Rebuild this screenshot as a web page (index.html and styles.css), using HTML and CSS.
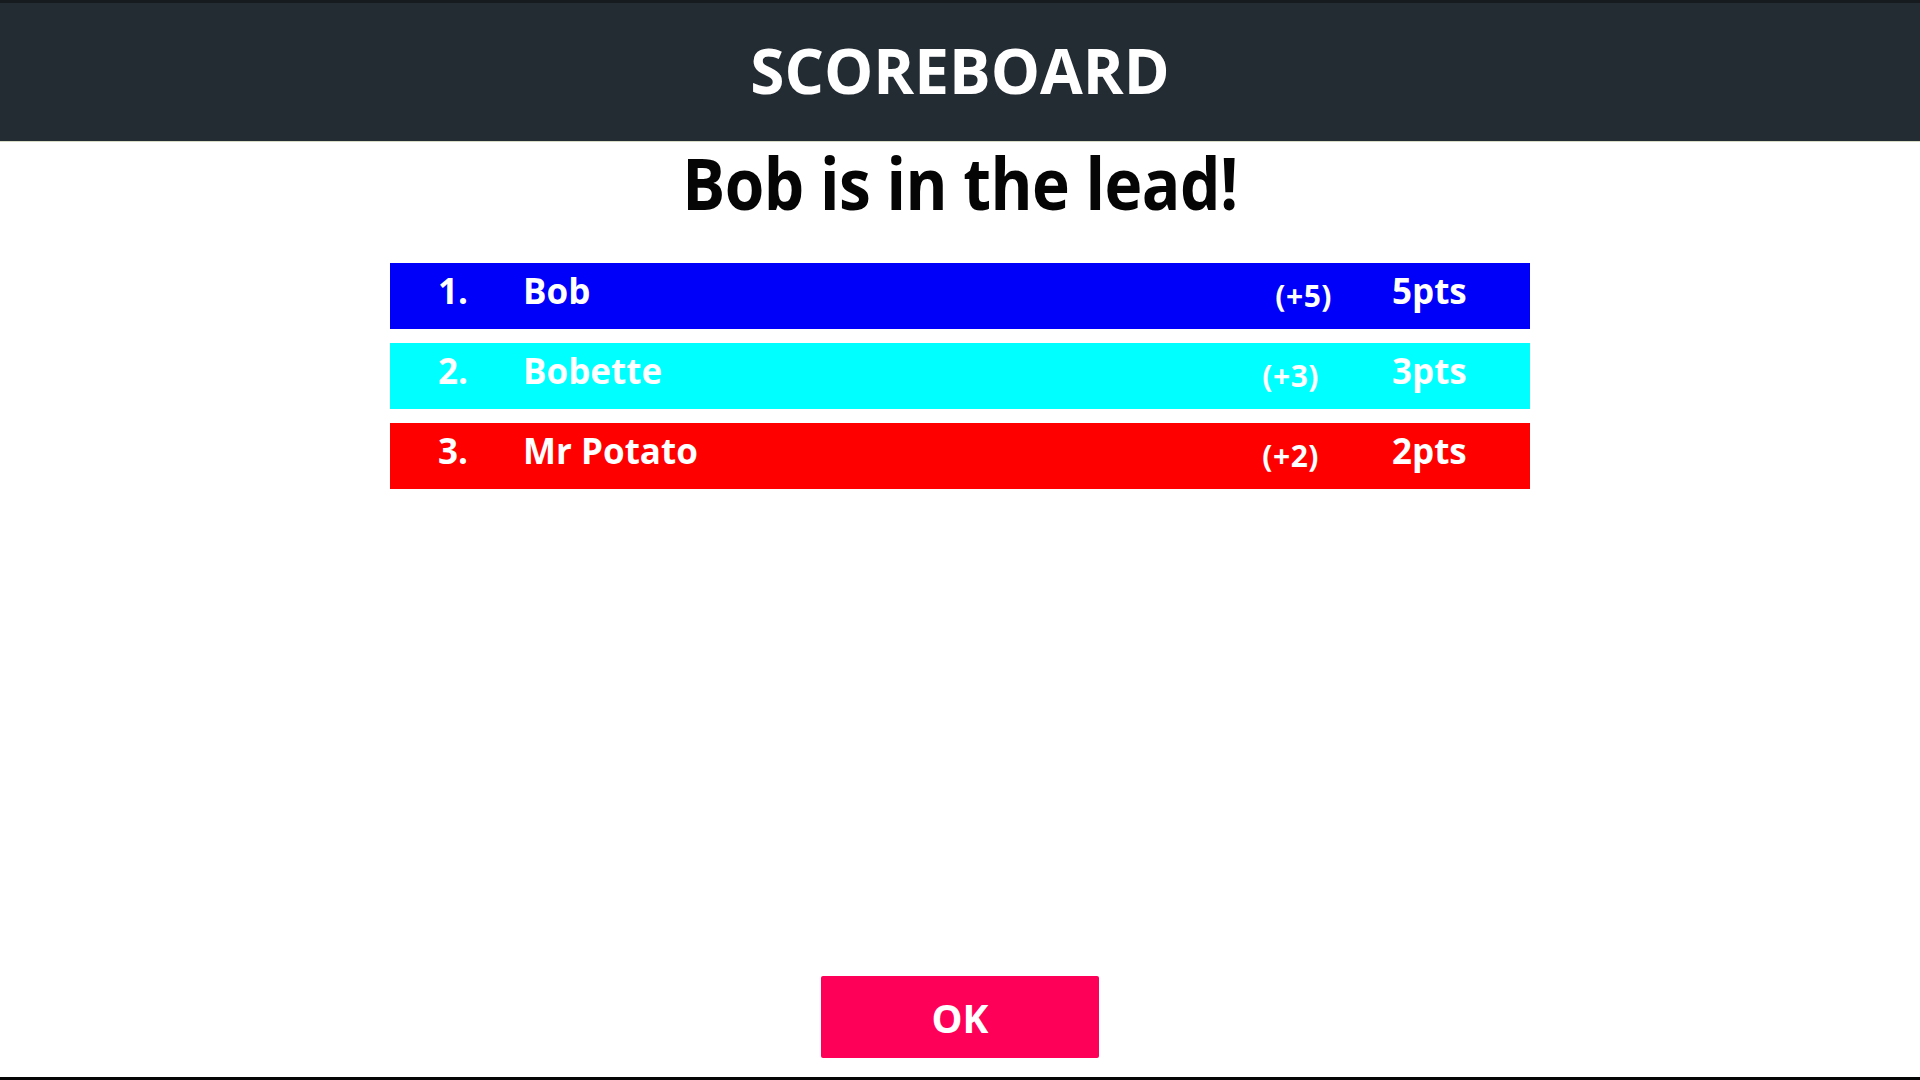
FILE: index.html
```html
<!DOCTYPE html>
<html lang="en">
<head>
<meta charset="utf-8">
<title>Scoreboard</title>
<link rel="stylesheet" href="styles.css">
</head>
<body>
<div class="screen">
  <header class="topbar">
    <h1 class="topbar-title">SCOREBOARD</h1>
  </header>
  <main class="content">
    <h2 class="lead">Bob is in the lead!</h2>
    <ol class="board">
      <li class="row row-blue row-first">
        <span class="rank">1.</span>
        <span class="name">Bob</span>
        <span class="delta">(+5)</span>
        <span class="pts">5pts</span>
      </li>
      <li class="row row-cyan">
        <span class="rank">2.</span>
        <span class="name">Bobette</span>
        <span class="delta">(+3)</span>
        <span class="pts">3pts</span>
      </li>
      <li class="row row-red">
        <span class="rank">3.</span>
        <span class="name">Mr Potato</span>
        <span class="delta">(+2)</span>
        <span class="pts">2pts</span>
      </li>
    </ol>
    <button class="ok-btn" type="button">OK</button>
  </main>
</div>
</body>
</html>
```

FILE: styles.css
```css
* { box-sizing: border-box; }
html, body {
  margin: 0;
  padding: 0;
  background: #ffffff;
}
body {
  font-family: "Open Sans", "Noto Sans", sans-serif;
  font-weight: 700;
}
.screen {
  width: 1920px;
  height: 1080px;
  display: flex;
  flex-direction: column;
  border-bottom: 3px solid #050505;
  overflow: hidden;
}
.topbar {
  height: 142px;
  flex: none;
  background: #232b33;
  border-top: 3px solid #161b20;
  border-bottom: 1px solid #d8dcc4;
  display: flex;
  justify-content: center;
  align-items: flex-start;
}
.topbar-title {
  margin: 0;
  padding-top: 25px;
  color: #ffffff;
  font-size: 62px;
  font-weight: 700;
  line-height: 84px;
}
.content {
  flex: 1;
  display: flex;
  flex-direction: column;
  align-items: center;
}
.lead {
  margin: 1px 0 0;
  font-size: 64px;
  line-height: 80px;
  letter-spacing: -0.5px;
  color: #050505;
  font-weight: 700;
  transform: scaleY(1.12);
}
.board {
  list-style: none;
  margin: 40px 0 0;
  padding: 0;
  width: 1140px;
  display: flex;
  flex-direction: column;
  gap: 14px;
}
.row {
  height: 66px;
  display: flex;
  align-items: flex-start;
  padding: 4px 0 0 48px;
  color: #ffffff;
}
.row-blue { background: #0000fa; }
.row-cyan { background: #00ffff; }
.row-red { background: #ff0000; }
.rank {
  width: 85px;
  font-size: 35px;
  line-height: 48px;
}
.name {
  flex: 1;
  font-size: 35px;
  line-height: 48px;
}
.delta {
  font-size: 30px;
  line-height: 48px;
  letter-spacing: 0.5px;
  padding-top: 5px;
  margin-right: 73px;
}
.row-first .delta { margin-right: 60px; }
.pts {
  width: 138px;
  font-size: 35px;
  line-height: 48px;
}
.ok-btn {
  margin-top: auto;
  margin-bottom: 19px;
  width: 278px;
  height: 82px;
  border: none;
  border-radius: 2px;
  background: #ff0058;
  color: #ffffff;
  font-family: "Open Sans", "Noto Sans", sans-serif;
  font-weight: 700;
  font-size: 39px;
  padding: 0;
  cursor: pointer;
}
```
